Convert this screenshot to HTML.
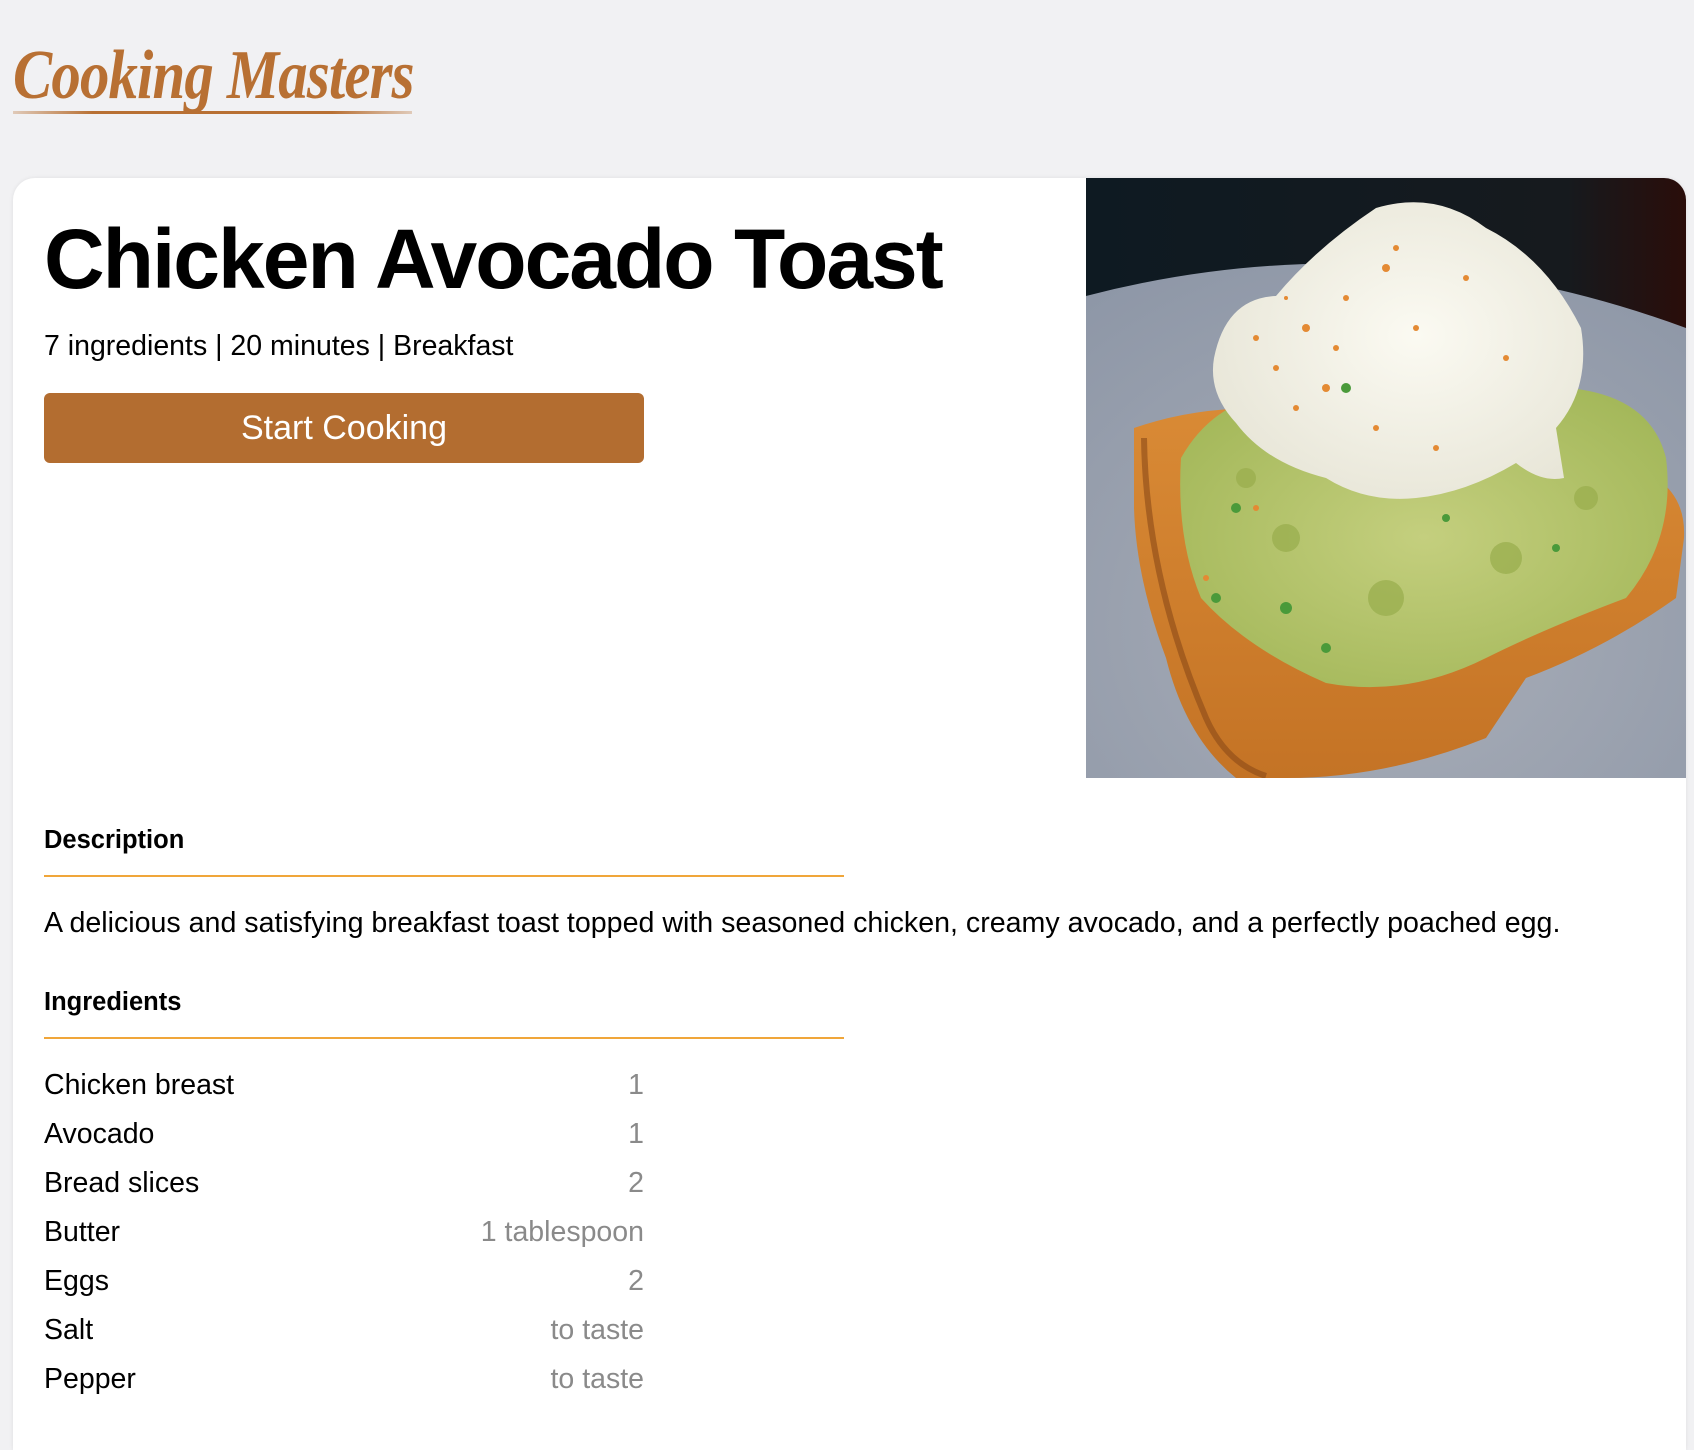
<!DOCTYPE html>
<html><head><meta charset="utf-8"><style>
html,body{margin:0;padding:0;background:#f1f1f3;width:1694px;height:1450px;overflow:hidden;font-family:"Liberation Sans",Arial,sans-serif;position:relative;}
.logo{position:absolute;left:13px;top:36px;font-family:"Liberation Serif",serif;font-style:italic;font-weight:bold;font-size:70px;color:#b87033;letter-spacing:-1px;transform:scaleX(0.84);transform-origin:left top;white-space:nowrap;}
.uline{position:absolute;left:13px;top:111px;width:399px;height:3px;background:linear-gradient(90deg,rgba(184,112,51,0.3),#b87033 20%,#b87033 80%,rgba(184,112,51,0.3));}
.card{position:absolute;left:13px;top:178px;width:1673px;height:1272px;background:#fff;border-radius:22px 22px 0 0;box-shadow:0 0 4px rgba(0,0,0,0.08);overflow:hidden;}
.img{position:absolute;left:1073px;top:0;width:600px;height:600px;}
h1{position:absolute;left:31px;top:33px;margin:0;font-size:84px;font-weight:bold;color:#000;letter-spacing:-2px;}
.meta{position:absolute;left:31px;top:152px;font-size:28.5px;color:#000;}
.btn{position:absolute;left:31px;top:215px;width:600px;height:70px;background:#b36d30;border-radius:6px;color:#fff;font-size:34px;text-align:center;line-height:70px;}
.h{position:absolute;left:31px;font-size:25.5px;font-weight:bold;color:#000;}
.line{position:absolute;left:31px;width:800px;height:2px;background:#f0a63a;}
.desc{position:absolute;left:31px;top:729px;font-size:28.6px;color:#000;white-space:nowrap;}
.row{position:absolute;left:31px;width:600px;font-size:28.5px;color:#000;}
.row span{position:absolute;right:0;top:0;color:#8a8a8a;}
</style></head><body>
<div class="logo">Cooking Masters</div>
<div class="uline"></div>
<div class="card">
<svg class="img" viewBox="0 0 600 600" xmlns="http://www.w3.org/2000/svg">
<defs>
<linearGradient id="bg" x1="0" y1="0" x2="1" y2="0"><stop offset="0" stop-color="#0e1a22"/><stop offset="0.8" stop-color="#161a1e"/><stop offset="1" stop-color="#2a0d0a"/></linearGradient>
<radialGradient id="pl" cx="0.5" cy="0.7" r="0.8"><stop offset="0" stop-color="#a9aeb8"/><stop offset="1" stop-color="#8e97a7"/></radialGradient>
<linearGradient id="tst" x1="0" y1="0" x2="0" y2="1"><stop offset="0" stop-color="#d98a35"/><stop offset="1" stop-color="#c47325"/></linearGradient>
<radialGradient id="av" cx="0.5" cy="0.5" r="0.6"><stop offset="0" stop-color="#c4cf7e"/><stop offset="1" stop-color="#a4b85a"/></radialGradient>
<radialGradient id="eg" cx="0.55" cy="0.45" r="0.6"><stop offset="0" stop-color="#fbfaf2"/><stop offset="1" stop-color="#e8e6d8"/></radialGradient>
</defs>
<rect width="600" height="600" fill="url(#bg)"/>
<path d="M0 118 Q300 40 600 150 L600 600 L0 600 Z" fill="url(#pl)"/>
<path d="M48 250 Q120 225 200 232 L570 300 Q600 320 598 360 L590 420 Q520 470 440 500 L400 560 Q300 600 200 600 L150 600 Q100 560 80 480 Q50 400 48 330 Z" fill="url(#tst)"/>
<path d="M58 260 Q60 400 120 540 Q140 585 180 598" fill="none" stroke="#8a4a18" stroke-width="6" opacity="0.6"/>
<path d="M95 280 Q140 200 250 215 L430 210 Q560 200 580 280 Q590 360 540 420 Q460 450 400 480 Q320 520 240 505 Q160 470 115 420 Q90 360 95 280 Z" fill="url(#av)"/>
<g fill="#98ad4c" opacity="0.7"><circle cx="200" cy="360" r="14"/><circle cx="300" cy="420" r="18"/><circle cx="420" cy="380" r="16"/><circle cx="500" cy="320" r="12"/><circle cx="160" cy="300" r="10"/></g>
<path d="M128 180 Q140 120 190 118 Q230 70 290 30 Q350 12 400 50 Q460 80 495 150 Q505 210 470 250 L478 300 Q455 305 430 285 Q380 315 330 320 Q280 325 240 300 Q180 285 150 245 Q122 215 128 180 Z" fill="url(#eg)"/>
<g fill="#e48a33"><circle cx="220" cy="150" r="4"/><circle cx="260" cy="120" r="3"/><circle cx="300" cy="90" r="4"/><circle cx="190" cy="190" r="3"/><circle cx="240" cy="210" r="4"/><circle cx="330" cy="150" r="3"/><circle cx="380" cy="100" r="3"/><circle cx="210" cy="230" r="3"/><circle cx="290" cy="250" r="3"/><circle cx="420" cy="180" r="3"/><circle cx="170" cy="160" r="3"/><circle cx="250" cy="170" r="3"/><circle cx="310" cy="70" r="3"/><circle cx="200" cy="120" r="2"/><circle cx="350" cy="270" r="3"/><circle cx="120" cy="400" r="3"/><circle cx="170" cy="330" r="3"/></g>
<g fill="#4a9a3a"><circle cx="260" cy="210" r="5"/><circle cx="150" cy="330" r="5"/><circle cx="200" cy="430" r="6"/><circle cx="360" cy="340" r="4"/><circle cx="470" cy="370" r="4"/><circle cx="240" cy="470" r="5"/><circle cx="130" cy="420" r="5"/></g>
</svg>
<h1>Chicken Avocado Toast</h1>
<div class="meta">7 ingredients | 20 minutes | Breakfast</div>
<div class="btn">Start Cooking</div>
<div class="h" style="top:648px">Description</div>
<div class="line" style="top:697px"></div>
<div class="desc">A delicious and satisfying breakfast toast topped with seasoned chicken, creamy avocado, and a perfectly poached egg.</div>
<div class="h" style="top:810px">Ingredients</div>
<div class="line" style="top:859px"></div>
<div class="row" style="top:891px">Chicken breast<span>1</span></div>
<div class="row" style="top:940px">Avocado<span>1</span></div>
<div class="row" style="top:989px">Bread slices<span>2</span></div>
<div class="row" style="top:1038px">Butter<span>1 tablespoon</span></div>
<div class="row" style="top:1087px">Eggs<span>2</span></div>
<div class="row" style="top:1136px">Salt<span>to taste</span></div>
<div class="row" style="top:1185px">Pepper<span>to taste</span></div>
</div>
</body></html>
